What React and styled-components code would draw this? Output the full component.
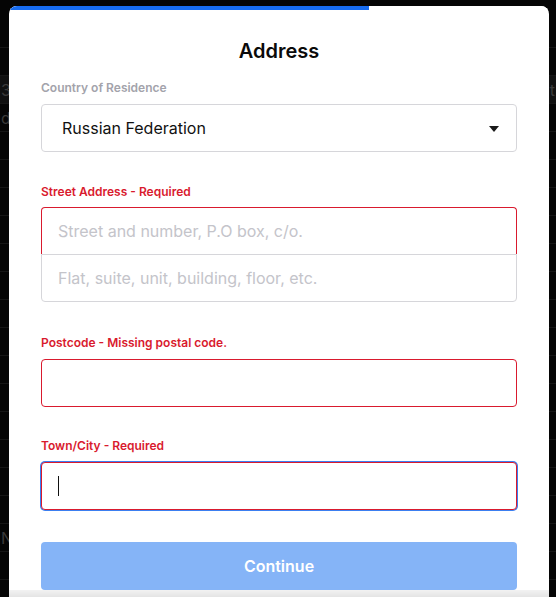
import React from 'react';
import styled, { createGlobalStyle } from 'styled-components';

const GlobalStyle = createGlobalStyle`
    html, body {
        margin: 0;
        padding: 0;
        background: #050505;
        font-family: Inter, 'Noto Sans', sans-serif;
        overflow: hidden;
    }
`;

const Page = styled.div`
    position: relative;
    width: 556px;
    height: 597px;
    overflow: hidden;
    background: #050505;
`;

const Backdrop = styled.div`
    display: flex;
    flex-direction: column;
    padding-top: 20px;
`;

const BackRow = styled.div`
    height: 27px;
    border-bottom: 1px solid #161616;
    display: flex;
    align-items: center;
    justify-content: space-between;
    padding: 0 1px;
    color: #3a3a3a;
    font-size: 16px;
    background: ${(p) => (p.$shade ? '#101010' : 'transparent')};
`;

const Modal = styled.div`
    position: absolute;
    top: 6px;
    left: 9px;
    width: 540px;
    height: 591px;
    background: #fff;
    border-radius: 8px 8px 0 0;
    overflow: hidden;
    display: flex;
    flex-direction: column;
`;

const Progress = styled.div`
    height: 4px;
    flex-shrink: 0;
    background: #fff;
`;

const ProgressFill = styled.div`
    height: 100%;
    background: #176cf0;
`;

const Body = styled.div`
    flex: 1;
    padding: 29px 32px 0;
    display: flex;
    flex-direction: column;
`;

const Title = styled.h2`
    margin: 0 0 17px;
    font-size: 20px;
    line-height: 24px;
    font-weight: 600;
    text-align: center;
    color: #0a0a0a;
`;

const Field = styled.div`
    display: flex;
    flex-direction: column;
    gap: ${(p) => p.$gap || 8}px;
    margin-bottom: ${(p) => p.$after || 32}px;
`;

const Label = styled.label`
    font-size: 12px;
    line-height: 16px;
    font-weight: 600;
    color: ${(p) => (p.$error ? '#d91a2e' : '#a3a3ab')};
`;

const SelectBox = styled.div`
    height: 48px;
    box-sizing: border-box;
    border: 1px solid #d6d6da;
    border-radius: 4px;
    display: flex;
    align-items: center;
    justify-content: space-between;
    padding: 0 17px 0 20px;
    font-size: 16px;
    color: #111;
`;

const Caret = styled.span`
    width: 0;
    height: 0;
    border-left: 5.5px solid transparent;
    border-right: 5.5px solid transparent;
    border-top: 6px solid #1a1a1a;
    margin-top: 2px;
`;

const Group = styled.div`
    display: flex;
    flex-direction: column;
`;

const Input = styled.input`
    height: 48px;
    box-sizing: border-box;
    width: 100%;
    padding: 0 16px;
    font-family: Inter, 'Noto Sans', sans-serif;
    font-size: 16px;
    color: #111;
    background: #fff;
    border: 1px solid ${(p) => (p.$error ? '#d91a2e' : '#d6d6da')};
    border-radius: 4px;
    outline: none;
    caret-color: transparent;

    &::placeholder {
        color: #c4c4ca;
    }

    &:focus {
        box-shadow: 0 0 0 1px #3b7ff0;
    }
`;

const TopInput = styled(Input)`
    height: 47px;
    border-bottom: none;
    border-radius: 4px 4px 0 0;
`;

const BottomInput = styled(Input)`
    border-radius: 0 0 4px 4px;
`;

const FocusWrap = styled.div`
    position: relative;
`;

const TextCursor = styled.span`
    position: absolute;
    left: 17px;
    top: 14px;
    width: 1px;
    height: 20px;
    background: #111;
    pointer-events: none;
`;

const Button = styled.button`
    height: 48px;
    border: none;
    border-radius: 4px;
    background: #85b4f7;
    color: #fff;
    font-family: Inter, 'Noto Sans', sans-serif;
    font-size: 16px;
    font-weight: 600;
`;

const Fade = styled.div`
    height: 7px;
    flex-shrink: 0;
    background: linear-gradient(#f2f2f2, #e4e4e4);
`;

const backRows = ['', '', '34', 'de', '', '', '', '', '', '', '', '', '', '', '', '', '', '', 'N', '', ''];

export default function App() {
    return (
        <Page>
            <GlobalStyle />
            <Backdrop>
                {backRows.map((t, i) => (
                    <BackRow key={i} $shade={i === 2}>
                        <span>{t}</span>
                        <span>{i === 2 ? 'nt' : ''}</span>
                    </BackRow>
                ))}
            </Backdrop>
            <Modal>
                <Progress>
                    <ProgressFill style={{ width: `${(360 / 540) * 100}%` }} />
                </Progress>
                <Body>
                    <Title>Address</Title>
                    <Field>
                        <Label>Country of Residence</Label>
                        <SelectBox>
                            <span>Russian Federation</span>
                            <Caret />
                        </SelectBox>
                    </Field>
                    <Field $gap={7} $after={33}>
                        <Label $error>Street Address - Required</Label>
                        <Group>
                            <TopInput $error placeholder="Street and number, P.O box, c/o." />
                            <BottomInput placeholder="Flat, suite, unit, building, floor, etc." />
                        </Group>
                    </Field>
                    <Field $after={31}>
                        <Label $error>Postcode - Missing postal code.</Label>
                        <Input $error />
                    </Field>
                    <Field>
                        <Label $error>Town/City - Required</Label>
                        <FocusWrap>
                            <Input $error autoFocus />
                            <TextCursor />
                        </FocusWrap>
                    </Field>
                    <Button>Continue</Button>
                </Body>
                <Fade />
            </Modal>
        </Page>
    );
}
